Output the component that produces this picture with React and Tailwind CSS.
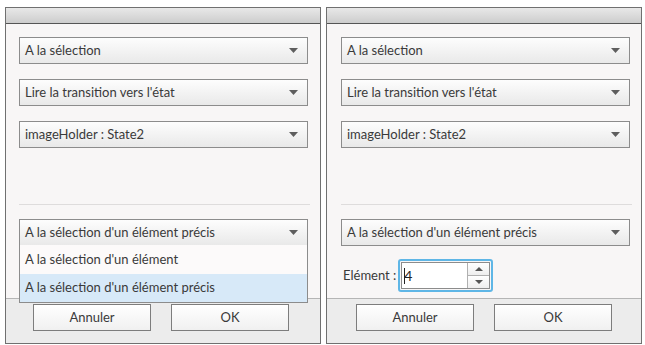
import React from 'react';

const font = { fontFamily: 'Lato, "Open Sans", sans-serif' };

function Arrow() {
  return (
    <svg width="9" height="5" viewBox="0 0 9 5" className="shrink-0">
      <path d="M0 0 L9 0 L4.5 5 Z" fill="#5e5e5e" />
    </svg>
  );
}

function Select({ label }) {
  return (
    <div className="h-[27px] flex items-center justify-between pl-[5px] pr-[9px] border border-[#8c8c8c] bg-gradient-to-b from-[#fdfdfd] to-[#e9e9e9] text-[13px] text-[#3a3a3a]">
      <span>{label}</span>
      <Arrow />
    </div>
  );
}

function Footer({ shift }) {
  return (
    <div className={`h-[45px] border-t border-[#b5b5b5] bg-[#ececec] flex justify-center gap-[20px] pt-[5px] ${shift ? 'pr-[4px]' : ''}`}>
      <button className="w-[118px] h-[27px] border border-[#7d7d7d] bg-gradient-to-b from-[#ffffff] to-[#f0f0f0] text-[13px] text-[#3a3a3a]">
        Annuler
      </button>
      <button className="w-[118px] h-[27px] border border-[#7d7d7d] bg-gradient-to-b from-[#ffffff] to-[#f0f0f0] text-[13px] text-[#3a3a3a]">
        OK
      </button>
    </div>
  );
}

function Panel({ children, shift }) {
  return (
    <div className="relative w-[316px] h-[337px] flex flex-col border border-[#707070] bg-[#f8f6f6]">
      <div className="h-[16px] shrink-0 border-b border-[#555] bg-gradient-to-b from-[#e8e8e8] to-[#cdcdcd]" />
      <div className="flex-1 relative">{children}</div>
      <Footer shift={shift} />
    </div>
  );
}

function TopSelects() {
  return (
    <div className="flex flex-col gap-[15px]">
      <Select label="A la sélection" />
      <Select label="Lire la transition vers l'état" />
      <Select label="imageHolder : State2" />
    </div>
  );
}

export default function App() {
  return (
    <div className="w-[645px] h-[345px] bg-white flex gap-[5px] pl-[5px] pt-[7px]" style={font}>
      <Panel shift>
        <div className="pt-[13px] pl-[13px] pr-[12px]">
          <TopSelects />
          <div className="mt-[56px] h-px bg-[#dedcdc] mr-[-2px]" />
          <div className="mt-[14px] relative">
            <Select label="A la sélection d'un élément précis" />
            <div className="absolute left-0 right-0 top-[26px] z-10 border border-[#8c8c8c] border-t-0 bg-[#fcfafa] text-[13px] text-[#3a3a3a]">
              <div className="h-[29px] flex items-center pl-[5px]">A la sélection d'un élément</div>
              <div className="h-[28px] flex items-center pl-[5px] bg-[#d7e9f8]">A la sélection d'un élément précis</div>
            </div>
          </div>
        </div>
      </Panel>
      <Panel>
        <div className="pt-[13px] pl-[14px] pr-[11px]">
          <TopSelects />
          <div className="mt-[56px] h-px bg-[#dedcdc] mr-[-2px]" />
          <div className="mt-[14px]">
            <Select label="A la sélection d'un élément précis" />
          </div>
          <div className="mt-[13px] flex items-center gap-[2px] text-[13px] text-[#3a3a3a]">
            <span className="pl-[2px]">Elément :</span>
            <div className="w-[95px] h-[33px] rounded-[3px] border-2 border-[#5fb6e6] p-px">
              <div className="h-full flex border border-[#8c8c8c] bg-white">
                <div className="flex-1 flex items-center pl-[2px]">
                  <span className="w-px h-[16px] bg-[#222] mr-[-1px]" />
                  <span className="text-[14px] text-[#222]">4</span>
                </div>
                <div className="w-[22px] flex flex-col border-l border-[#b0b0b0]">
                  <div className="flex-1 flex items-center justify-center bg-gradient-to-b from-white to-[#eee] border-b border-[#b0b0b0]">
                    <svg width="8" height="4" viewBox="0 0 8 4"><path d="M0 4 L8 4 L4 0 Z" fill="#555" /></svg>
                  </div>
                  <div className="flex-1 flex items-center justify-center bg-gradient-to-b from-white to-[#eee]">
                    <svg width="8" height="4" viewBox="0 0 8 4"><path d="M0 0 L8 0 L4 4 Z" fill="#555" /></svg>
                  </div>
                </div>
              </div>
            </div>
          </div>
        </div>
      </Panel>
    </div>
  );
}
